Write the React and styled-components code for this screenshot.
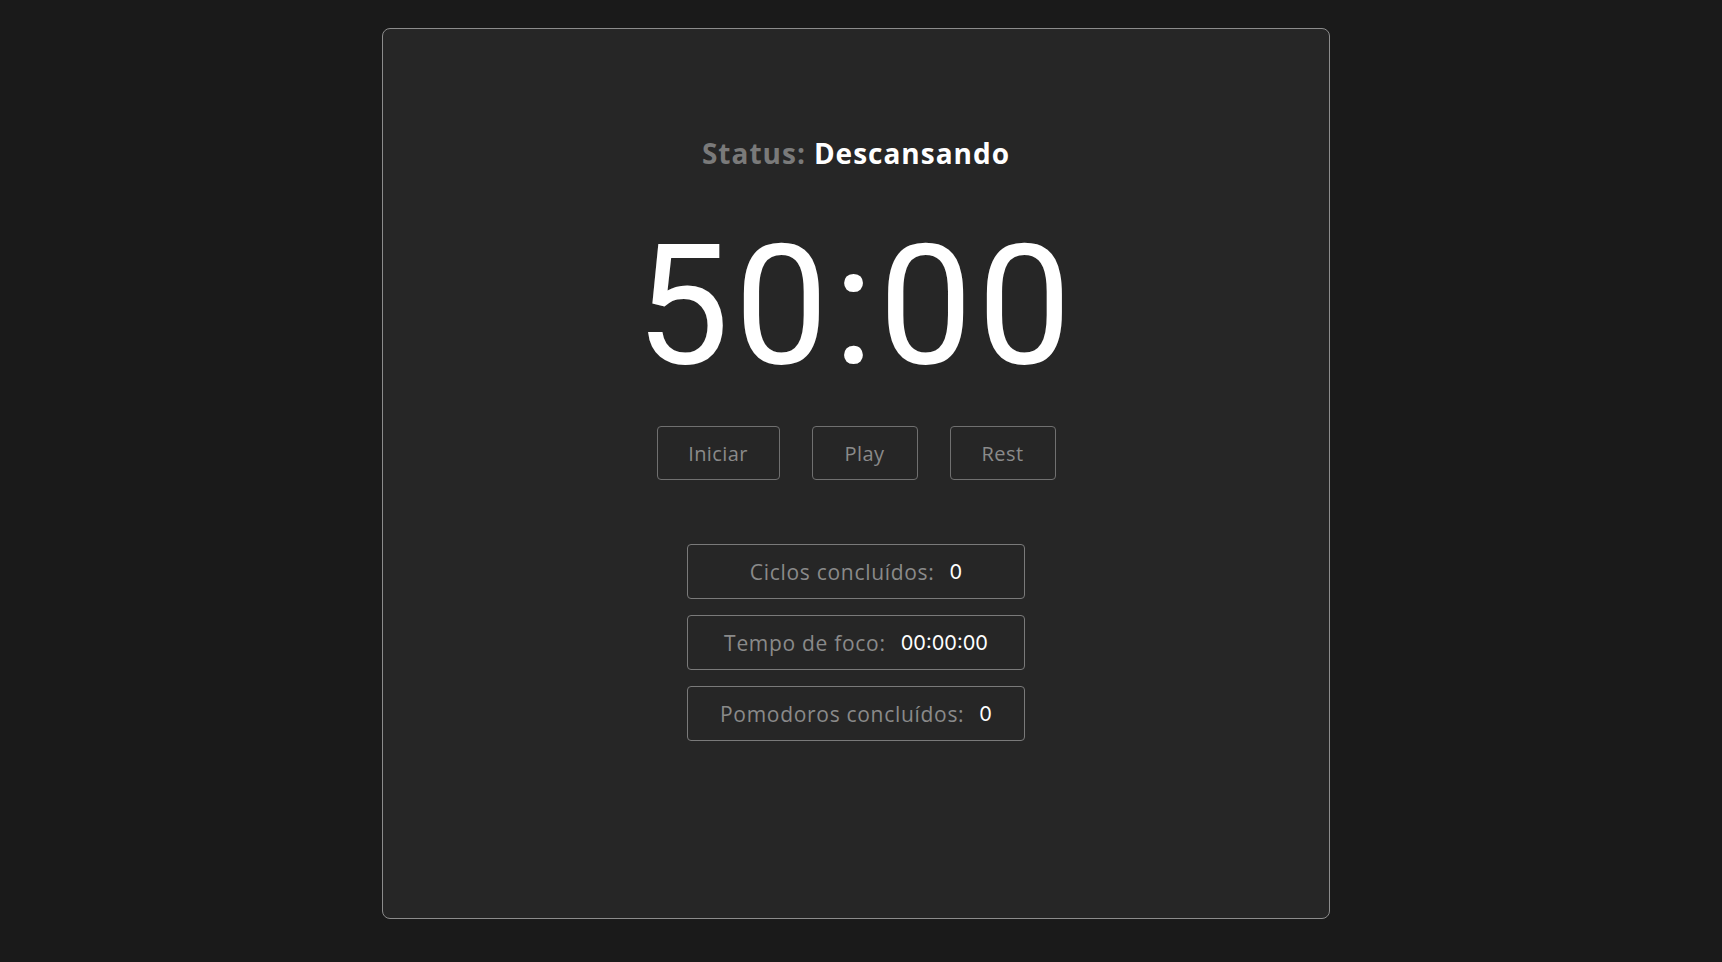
import React from 'react';
import styled, { createGlobalStyle } from 'styled-components';

const GlobalStyle = createGlobalStyle`
  html, body {
    margin: 0;
    padding: 0;
    background: #1a1a1a;
    font-family: "Open Sans", "Liberation Sans", sans-serif;
  }
  * { box-sizing: border-box; }
`;

//styles
const Page = styled.main`
  min-height: 962px;
  padding: 28px 10px 44px 0;
  display: flex;
  justify-content: center;
`;

const Card = styled.section`
  width: 948px;
  height: 891px;
  background: #262626;
  border: 1px solid #8c8c8c;
  border-radius: 8px;
  display: flex;
  flex-direction: column;
  align-items: center;
  padding-top: 104px;
`;

const Status = styled.h2`
  margin: 0;
  font-size: 28px;
  line-height: 40px;
  font-weight: 700;
  color: #7a7a7a;
  letter-spacing: 1px;
  span {
    color: #ffffff;
    margin-left: 8px;
  }
`;

const Timer = styled.div`
  margin-top: 50px;
  font-family: Roboto, "Liberation Sans", sans-serif;
  font-size: 167px;
  line-height: 167px;
  font-weight: 400;
  letter-spacing: 5px;
  color: #ffffff;
`;

const Controls = styled.div`
  margin-top: 36px;
  display: flex;
  gap: 32px;
`;

const Button = styled.button`
  width: ${({ $w }) => $w}px;
  height: 54px;
  background: transparent;
  border: 1px solid #707070;
  border-radius: 4px;
  color: #8a8a8a;
  font-family: "Open Sans", "Liberation Sans", sans-serif;
  font-size: 20px;
  letter-spacing: 0.4px;
  cursor: pointer;
`;

const Stats = styled.div`
  margin-top: 64px;
  display: flex;
  flex-direction: column;
  gap: 16px;
`;

const StatBox = styled.div`
  width: 338px;
  height: 55px;
  border: 1px solid #7a7a7a;
  border-radius: 4px;
  display: flex;
  justify-content: center;
  align-items: center;
  gap: 15px;
  font-size: 21px;
`;

const Label = styled.span`
  color: #8a8a8a;
  letter-spacing: 0.7px;
`;

const Value = styled.span`
  color: #ffffff;
  font-family: Inter, Roboto, sans-serif;
  font-size: 20px;
`;

const stats = [
  { label: 'Ciclos concluídos:', value: '0' },
  { label: 'Tempo de foco:', value: '00:00:00' },
  { label: 'Pomodoros concluídos:', value: '0' }
];

const App = () => {
  return (
    <>
      <GlobalStyle />
      <Page>
        <Card>
          <Status>
            Status:<span>Descansando</span>
          </Status>
          <Timer>50:00</Timer>
          <Controls>
            <Button $w={123}>Iniciar</Button>
            <Button $w={106}>Play</Button>
            <Button $w={106}>Rest</Button>
          </Controls>
          <Stats>
            {stats.map((s) => (
              <StatBox key={s.label}>
                <Label>{s.label}</Label>
                <Value>{s.value}</Value>
              </StatBox>
            ))}
          </Stats>
        </Card>
      </Page>
    </>
  );
};

export default App;
